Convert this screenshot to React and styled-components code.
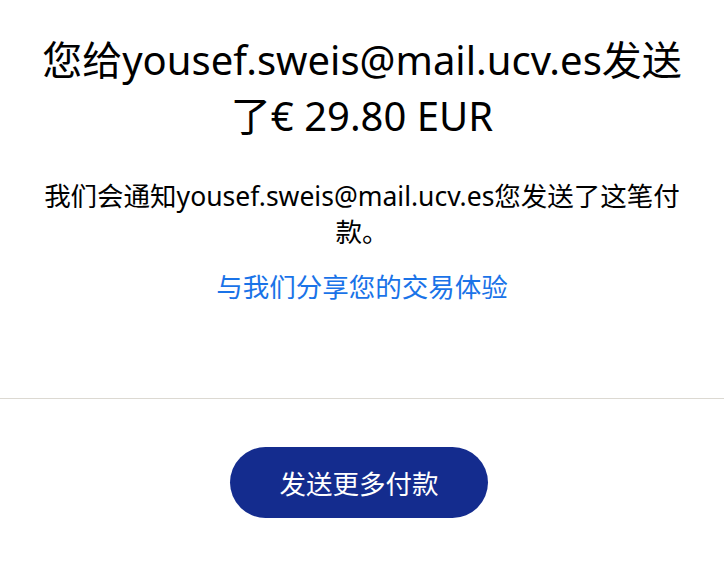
import React from 'react';
import styled, { createGlobalStyle } from 'styled-components';

const GlobalStyle = createGlobalStyle`
  body {
    margin: 0;
    background: #fff;
    font-family: 'Noto Sans', 'Noto Sans CJK SC', sans-serif;
    color: #000;
  }
`;

const Page = styled.div`
  display: flex;
  flex-direction: column;
  align-items: center;
`;

const Summary = styled.section`
  width: 100%;
  box-sizing: border-box;
  padding: 32px 35px 0;
  height: 398px;
  text-align: center;
`;

const Title = styled.h1`
  margin: 0;
  font-size: 40px;
  font-weight: 400;
  line-height: 56px;
`;

const Note = styled.p`
  margin: 34px 0 0;
  font-size: 26.5px;
  line-height: 36px;
`;

const FeedbackLink = styled.a`
  display: inline-block;
  margin-top: 19px;
  font-size: 26.5px;
  line-height: 36px;
  color: #1a73e8;
  text-decoration: none;
`;

const Divider = styled.hr`
  width: 100%;
  margin: 0;
  border: 0;
  border-top: 1px solid #dcd9d2;
`;

const Actions = styled.div`
  padding: 48px 6px 0 0;
`;

const PrimaryButton = styled.button`
  width: 258px;
  height: 71px;
  border: 0;
  border-radius: 36px;
  background: #142c8e;
  color: #fff;
  font-family: inherit;
  font-size: 26.5px;
  cursor: pointer;
`;

export default function App() {
  return (
    <>
      <GlobalStyle />
      <Page>
        <Summary>
          <Title>您给yousef.sweis@mail.ucv.es发送了€ 29.80 EUR</Title>
          <Note>我们会通知yousef.sweis@mail.ucv.es您发送了这笔付款。</Note>
          <FeedbackLink href="#">与我们分享您的交易体验</FeedbackLink>
        </Summary>
        <Divider />
        <Actions>
          <PrimaryButton>发送更多付款</PrimaryButton>
        </Actions>
      </Page>
    </>
  );
}
